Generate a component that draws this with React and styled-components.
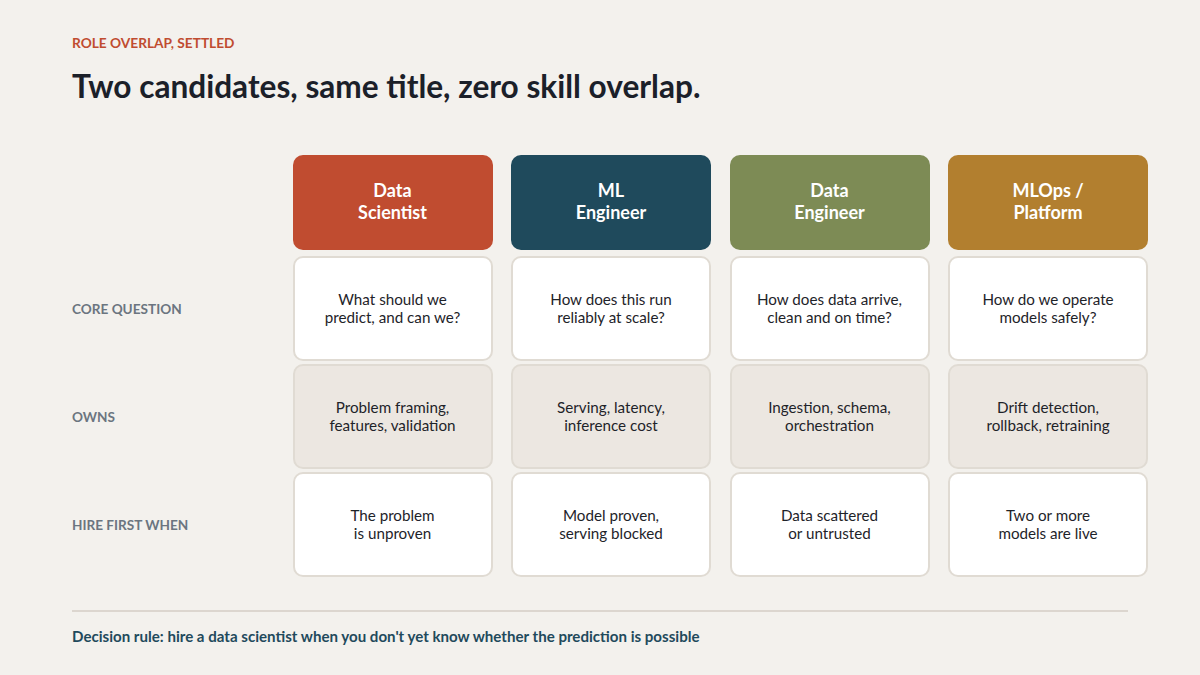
import React from "react";
import styled, { createGlobalStyle } from "styled-components";

const GlobalStyle = createGlobalStyle`
  html, body {
    margin: 0;
    padding: 0;
    background: #f3f1ed;
  }
  body {
    font-family: Lato, "Open Sans", sans-serif;
    -webkit-font-smoothing: antialiased;
  }
`;

const roles = [
  { name: ["Data", "Scientist"], color: "#c04c30" },
  { name: ["ML", "Engineer"], color: "#1f4a5c" },
  { name: ["Data", "Engineer"], color: "#7d8b55" },
  { name: ["MLOps /", "Platform"], color: "#b27f2f" },
];

const rows = [
  {
    label: "Core question",
    tint: false,
    cells: [
      ["What should we", "predict, and can we?"],
      ["How does this run", "reliably at scale?"],
      ["How does data arrive,", "clean and on time?"],
      ["How do we operate", "models safely?"],
    ],
  },
  {
    label: "Owns",
    tint: true,
    cells: [
      ["Problem framing,", "features, validation"],
      ["Serving, latency,", "inference cost"],
      ["Ingestion, schema,", "orchestration"],
      ["Drift detection,", "rollback, retraining"],
    ],
  },
  {
    label: "Hire first when",
    tint: false,
    cells: [
      ["The problem", "is unproven"],
      ["Model proven,", "serving blocked"],
      ["Data scattered", "or untrusted"],
      ["Two or more", "models are live"],
    ],
  },
];

const Lines = ({ lines }) =>
  lines.map((l, i) => (
    <React.Fragment key={i}>
      {i > 0 && <br />}
      {l}
    </React.Fragment>
  ));

export default function App() {
  return (
    <>
      <GlobalStyle />
      <Slide>
        <Eyebrow>Role overlap, settled</Eyebrow>
        <Title>Two candidates, same title, zero skill overlap.</Title>

        <Matrix>
          <Corner />
          {roles.map((r) => (
            <RoleHeader key={r.name.join(" ")} $color={r.color}>
              <Lines lines={r.name} />
            </RoleHeader>
          ))}

          {rows.map((row) => (
            <React.Fragment key={row.label}>
              <RowLabel>{row.label}</RowLabel>
              {row.cells.map((c, i) => (
                <Cell key={i} $tint={row.tint}>
                  <Lines lines={c} />
                </Cell>
              ))}
            </React.Fragment>
          ))}
        </Matrix>

        <Rule />
        <Footnote>
          Decision rule: hire a data scientist when you don't yet know whether
          the prediction is possible
        </Footnote>
      </Slide>
    </>
  );
}

const Slide = styled.div`
  width: 1200px;
  height: 675px;
  box-sizing: border-box;
  padding: 34px 72px 0 72px;
  display: flex;
  flex-direction: column;
  overflow: hidden;
`;

const Eyebrow = styled.div`
  font-size: 13.7px;
  line-height: 18px;
  font-weight: 700;
  text-transform: uppercase;
  color: #c04c30;
`;

const Title = styled.h1`
  margin: 14px 0 0 0;
  font-size: 31.6px;
  line-height: 40px;
  font-weight: 700;
  color: #1b2029;
`;

const Matrix = styled.div`
  margin-top: 49px;
  margin-right: -20px;
  display: grid;
  grid-template-columns: 202px repeat(4, 1fr);
  grid-template-rows: 98px 105px 105px 105px;
  column-gap: 18.5px;
  row-gap: 3px;
`;

const Corner = styled.div``;

const RoleHeader = styled.div`
  height: 95px;
  box-sizing: border-box;
  padding-bottom: 4px;
  border-radius: 10px;
  background: ${(p) => p.$color};
  color: #ffffff;
  font-size: 18px;
  line-height: 22px;
  font-weight: 700;
  display: flex;
  align-items: center;
  justify-content: center;
  text-align: center;
`;

const RowLabel = styled.div`
  display: flex;
  align-items: center;
  font-size: 13.6px;
  font-weight: 700;
  text-transform: uppercase;
  color: #6b7580;
`;

const Cell = styled.div`
  box-sizing: border-box;
  padding-bottom: 2px;
  border: 2px solid #e0dbd3;
  border-radius: 10px;
  background: ${(p) => (p.$tint ? "#ece7e1" : "#ffffff")};
  color: #1e2329;
  font-size: 15.2px;
  line-height: 18px;
  display: flex;
  align-items: center;
  justify-content: center;
  text-align: center;
`;

const Rule = styled.div`
  margin-top: 33px;
  height: 2px;
  background: #dcd6cf;
`;

const Footnote = styled.div`
  margin-top: 15px;
  font-size: 15.1px;
  line-height: 18px;
  font-weight: 700;
  color: #1f4a5c;
`;
